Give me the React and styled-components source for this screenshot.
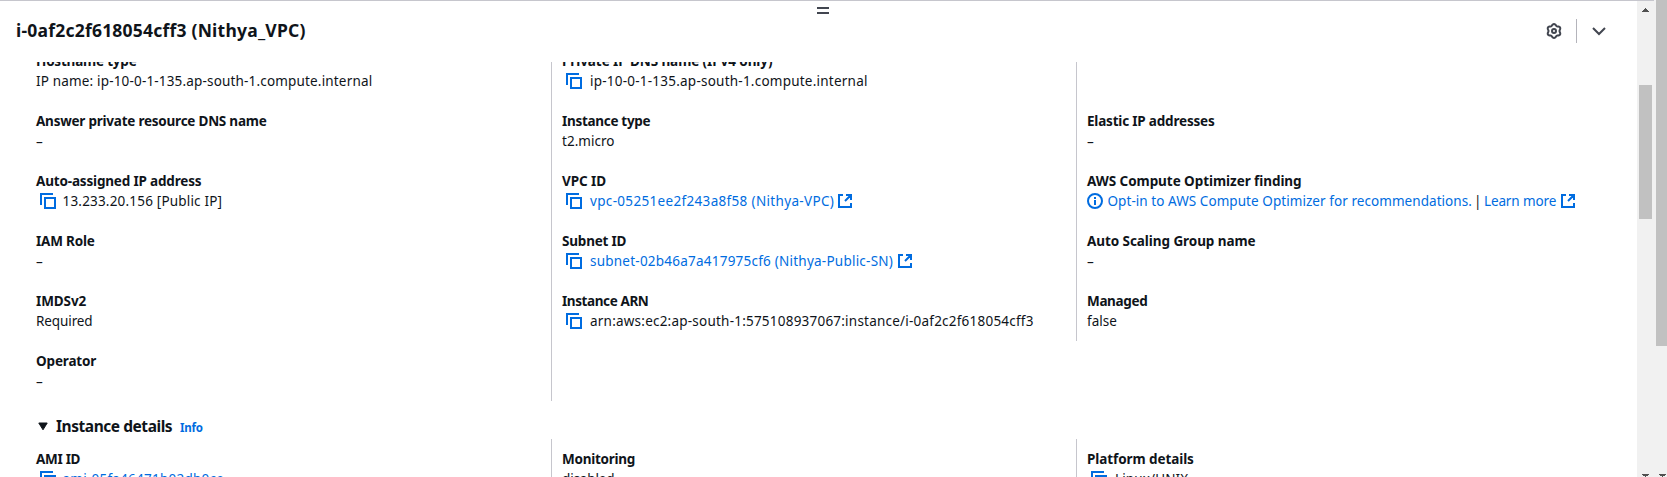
import React from 'react';
import styled, { createGlobalStyle } from 'styled-components';

const INK = '#0f141a';
const LINK = '#006ce0';
const ICON = '#424650';

const GlobalStyle = createGlobalStyle`
  * { box-sizing: border-box; }
  body {
    margin: 0;
    background: #fff;
    overflow: hidden;
    color: ${INK};
    font-family: "Noto Sans", "Open Sans", sans-serif;
    font-size: 13.5px;
    line-height: 20px;
  }
`;

const Page = styled.div`
  display: flex;
  width: 1667px;
  height: 477px;
  overflow: hidden;
`;

const SplitPanel = styled.section`
  display: flex;
  width: 1654px;
  border-top: 1px solid #c6c6cd;
`;

const PanelMain = styled.div`
  display: flex;
  flex-direction: column;
  width: 1637px;
`;

const HandleRow = styled.div`
  display: flex;
  justify-content: center;
  height: 13px;
  padding: 6px 0 0 9px;
`;

const Handle = styled.span`
  width: 12px;
  height: 7px;
  border: solid ${ICON};
  border-width: 2px 0;
`;

const Header = styled.header`
  display: flex;
  align-items: center;
  justify-content: space-between;
  height: 48px;
  padding: 0 30px 17px 16px;
`;

const Title = styled.h2`
  margin: 0;
  font-size: 17.5px;
  font-weight: 700;
  line-height: 24px;
  letter-spacing: 0.22px;
  white-space: nowrap;
`;

const Actions = styled.div`
  display: flex;
  align-items: center;
  height: 24px;
  margin-top: 3px;
  svg { display: block; }
`;

const Divider = styled.span`
  width: 1px;
  height: 24px;
  margin: 0 14px;
  background: #b4b4bb;
`;

const ScrollArea = styled.div`
  flex: 1;
  min-height: 0;
  overflow: hidden;
`;

const Content = styled.div`
  margin-top: -21px;
  padding-left: 36px;
`;

const Columns = styled.div`
  display: grid;
  grid-template-columns: 515px 525px 1fr;
  align-items: start;
`;

const Field = styled.div`
  height: 40px;
  white-space: nowrap;
`;

const Label = styled.div`
  font-weight: 700;
  height: 20px;
  letter-spacing: ${(p) => p.$track || 0}px;
`;

const Value = styled.div`
  display: flex;
  align-items: center;
  height: 20px;
  svg { display: block; flex: none; }
`;

const CopySlot = styled.span`
  display: flex;
  width: 27px;
  padding-left: 4px;
`;

const Column = styled.div`
  display: flex;
  flex-direction: column;
  gap: 20px;
  padding: 10px 0 10px ${(p) => (p.$ruled ? '10px' : '0')};
  border-left: ${(p) => (p.$ruled ? '1px solid #c6c6cd' : 'none')};
  ${CopySlot} { width: ${(p) => (p.$ruled ? '28px' : '26.5px')}; }
`;

const InfoSlot = styled.span`
  display: flex;
  width: 20.5px;
`;

const Text = styled.span`
  letter-spacing: ${(p) => p.$track || 0}px;
`;

const Dash = styled.span`
  padding-top: 1px;
`;

const Link = styled.a`
  display: inline-flex;
  align-items: center;
  gap: ${(p) => p.$gap || 3}px;
  color: ${LINK};
  letter-spacing: ${(p) => p.$track || 0}px;
`;

const Pipe = styled.span`
  width: 9px;
  margin: 0 1px 0 2px;
`;

const SectionHeading = styled.div`
  display: flex;
  align-items: center;
  height: 38px;
  padding: 12px 0 0 2px;
`;

const SectionTitle = styled.h3`
  margin: 0 0 0 8px;
  width: 124px;
  font-size: 15.5px;
  font-weight: 700;
  letter-spacing: -0.45px;
  white-space: nowrap;
`;

const InfoLink = styled.a`
  color: ${LINK};
  font-size: 11.5px;
  font-weight: 700;
  letter-spacing: -0.2px;
  padding: 3px 0 0 0;
`;

const Scrollbar = styled.div`
  display: flex;
  flex-direction: column;
  align-items: center;
  justify-content: space-between;
  width: 17px;
  height: 476px;
  padding-top: 7px;
  background: #f1f1f1;
  svg { display: block; }
`;

const ScrollThumb = styled.div`
  width: 13px;
  height: 134px;
  margin: 73px 0 auto;
  background: #c1c1c1;
`;

const PageScrollbar = styled.div`
  display: flex;
  flex-direction: column;
  justify-content: space-between;
  width: 13px;
  height: 477px;
  padding-left: 2px;
  background: #f1f1f1;
  svg { display: block; margin-left: 3px; }
`;

const PageThumb = styled.div`
  height: 346px;
  background: #c1c1c1;
`;

const CopyIcon = () => (
  <svg width="16" height="16" viewBox="0 0 16 16" fill="none" stroke={LINK} strokeWidth="2">
    <path d="M1 12V1h12" />
    <path d="M5 5h10v10H5z" />
  </svg>
);

const ExternalIcon = () => (
  <svg width="16" height="16" viewBox="0 0 16 16" fill="none" stroke={LINK} strokeWidth="2">
    <path d="M6 2H2v12h12v-4M9 2h5v5M14 2 8 8" />
  </svg>
);

const InfoIcon = () => (
  <svg width="16" height="16" viewBox="0 0 16 16" fill="none" stroke={LINK} strokeWidth="2">
    <circle cx="8" cy="8" r="7" />
    <path d="M8 4v2M8 7v5" />
  </svg>
);

const gearOutline = Array.from({ length: 72 }, (_, i) => {
  const a = (i * 5 * Math.PI) / 180;
  const r = 6.25 + 0.75 * Math.cos(6 * a);
  return `${i ? 'L' : 'M'}${(8 + r * Math.sin(a)).toFixed(2)} ${(8 - r * Math.cos(a)).toFixed(2)}`;
}).join('');

const GearIcon = () => (
  <svg width="16" height="16" viewBox="0 0 16 16" fill="none" stroke={ICON} strokeWidth="2">
    <path d={`${gearOutline}Z`} strokeLinejoin="round" />
    <circle cx="8" cy="8" r="2" />
  </svg>
);

const ChevronIcon = () => (
  <svg width="16" height="16" viewBox="0 0 16 16" fill="none" stroke={ICON} strokeWidth="2">
    <path d="m2 5 6 6 6-6" />
  </svg>
);

const CaretIcon = () => (
  <svg width="10" height="9" viewBox="0 0 10 9">
    <path d="M.8 1h8.4L5 7.8z" fill={INK} stroke={INK} strokeLinejoin="round" />
  </svg>
);

const ArrowUp = () => (
  <svg width="7" height="4" viewBox="0 0 7 4" shapeRendering="crispEdges">
    <path d="M0 4V3h1V2h1V1h1V0h1v1h1v1h1v1h1v1z" fill="#505050" />
  </svg>
);

const ArrowDown = () => (
  <svg width="7" height="3" viewBox="0 0 7 3" shapeRendering="crispEdges">
    <path d="M0 0h7v1H6v1H4v1H3V2H1V1H0z" fill="#505050" />
  </svg>
);

const Item = ({ label, track, copy, children }) => (
  <Field>
    <Label $track={track}>{label}</Label>
    <Value>
      {copy && <CopySlot><CopyIcon /></CopySlot>}
      {children || <Dash>–</Dash>}
    </Value>
  </Field>
);

export default function App() {
  return (
    <>
      <GlobalStyle />
      <Page>
        <SplitPanel>
          <PanelMain>
            <HandleRow><Handle /></HandleRow>
            <Header>
              <Title>i-0af2c2f618054cff3 (Nithya_VPC)</Title>
              <Actions>
                <GearIcon />
                <Divider />
                <ChevronIcon />
              </Actions>
            </Header>
            <ScrollArea>
              <Content>
                <Columns>
                  <Column>
                    <Item label="Hostname type" track={-0.2}>
                      <Text $track={0.17}>IP name: ip-10-0-1-135.ap-south-1.compute.internal</Text>
                    </Item>
                    <Item label="Answer private resource DNS name" track={-0.23} />
                    <Item label="Auto-assigned IP address" track={-0.17} copy>
                      <Text $track={0.19}>13.233.20.156 [Public IP]</Text>
                    </Item>
                    <Item label="IAM Role" track={-0.2} />
                    <Item label="IMDSv2" track={-0.1}><Text $track={-0.1}>Required</Text></Item>
                    <Item label="Operator" track={-0.16} />
                  </Column>
                  <Column $ruled>
                    <Item label="Private IP DNS name (IPv4 only)" track={-0.08} copy>
                      <Text $track={0.23}>ip-10-0-1-135.ap-south-1.compute.internal</Text>
                    </Item>
                    <Item label="Instance type" track={-0.3}><Text $track={0.03}>t2.micro</Text></Item>
                    <Item label="VPC ID" track={-0.08} copy>
                      <Link $track={0.33}>vpc-05251ee2f243a8f58 (Nithya-VPC)<ExternalIcon /></Link>
                    </Item>
                    <Item label="Subnet ID" track={-0.2} copy>
                      <Link $track={0.23} $gap={4}>subnet-02b46a7a417975cf6 (Nithya-Public-SN)<ExternalIcon /></Link>
                    </Item>
                    <Item label="Instance ARN" track={-0.4} copy>
                      <Text $track={0.22}>arn:aws:ec2:ap-south-1:575108937067:instance/i-0af2c2f618054cff3</Text>
                    </Item>
                    <Field />
                  </Column>
                  <Column $ruled>
                    <Field />
                    <Item label="Elastic IP addresses" track={-0.19} />
                    <Item label="AWS Compute Optimizer finding" track={-0.06}>
                      <InfoSlot><InfoIcon /></InfoSlot>
                      <Link $track={0.06}>Opt-in to AWS Compute Optimizer for recommendations.</Link>
                      <Pipe>|</Pipe>
                      <Link $track={-0.12} $gap={4}>Learn more<ExternalIcon /></Link>
                    </Item>
                    <Item label="Auto Scaling Group name" track={-0.07} />
                    <Item label="Managed" track={-0.35}><Text>false</Text></Item>
                  </Column>
                </Columns>
                <SectionHeading>
                  <CaretIcon />
                  <SectionTitle>Instance details</SectionTitle>
                  <InfoLink>Info</InfoLink>
                </SectionHeading>
                <Columns>
                  <Column>
                    <Item label="AMI ID" track={-0.3} copy>
                      <Link $track={0.24}>ami-05fa46471b02db0ce</Link>
                    </Item>
                  </Column>
                  <Column $ruled>
                    <Item label="Monitoring" track={-0.25}><Text $track={-0.15}>disabled</Text></Item>
                  </Column>
                  <Column $ruled>
                    <Item label="Platform details" track={-0.08} copy>
                      <Text $track={0.13}>Linux/UNIX</Text>
                    </Item>
                  </Column>
                </Columns>
              </Content>
            </ScrollArea>
          </PanelMain>
          <Scrollbar>
            <ArrowUp />
            <ScrollThumb />
            <ArrowDown />
          </Scrollbar>
        </SplitPanel>
        <PageScrollbar>
          <PageThumb />
          <ArrowDown />
        </PageScrollbar>
      </Page>
    </>
  );
}
